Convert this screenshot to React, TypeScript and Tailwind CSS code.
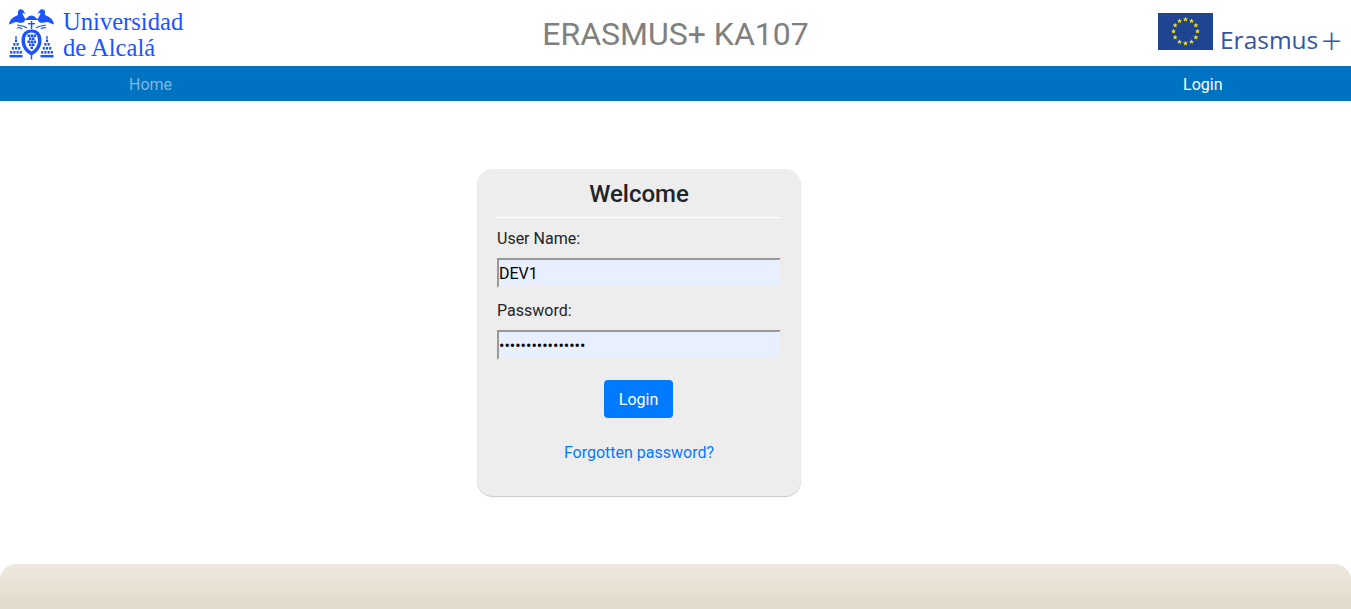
import React from 'react';

const roboto = 'font-[Roboto,sans-serif]';

// rows of dots in the towers on each side of the shield
const towerRows = [
  { y: 39.5, n: 1 },
  { y: 43, n: 2 },
  { y: 47, n: 3 },
  { y: 51, n: 4 },
];

function Tower({ cx }: { cx: number }) {
  return (
    <g>
      <rect x={cx - 0.7} y={36} width={1.4} height={3} />
      {towerRows.map((r) =>
        Array.from({ length: r.n }, (_, i) => (
          <rect key={`${r.y}-${i}`} x={cx + (i - (r.n - 1) / 2) * 3.2 - 1.1} y={r.y} width={2.2} height={2.6} />
        )),
      )}
      <rect x={cx - 6.5} y={55} width={13} height={2.4} />
    </g>
  );
}

function Crest() {
  const bird =
    'M18 12C18 9.500 21 8.500 23 10L25.500 14L23 12.700C22 13.500 23 15.500 24.500 17.500C25.500 19.500 25 21.500 23 22.500C20.500 23.500 18 22 16 22C13.500 22.500 11 24 9 24.500C9.500 20.500 12.500 17 17 15.500C18.500 15 18 13.500 18 12z';
  const squares = [
    [27.500, 34.500], [30.500, 34.500], [33.500, 34.500],
    [29, 37.500], [32, 37.500],
    [27.500, 40.500], [30.500, 40.500], [33.500, 40.500],
    [29, 43.500], [32, 43.500],
    [30.500, 46.500],
  ];
  return (
    <svg className="shrink-0" width="46" height="51" viewBox="9 9 46 51" fill="#1a53ff">
      <path d={bird} />
      <path d={bird} transform="translate(63 0) scale(-1 1)" />
      {/* cap and cross */}
      <path d="M27 18c1-1.500 2.500-2.500 4.500-2.500s3.500 1 4.500 2.500l2 1v1h-13v-1z" />
      <rect x="30.800" y="21" width="1.500" height="8" />
      <rect x="28" y="23" width="7" height="1.400" />
      <path d="M17 25c2 0 3 1 5 1s3 1 5 2M46 25c-2 0-3 1-5 1s-3 1-5 2M17 28c2-1 4 0 5 1M46 28c-2-1-4 0-5 1" fill="none" stroke="#1a53ff" strokeWidth="1.200" />
      {/* shield */}
      <path fillRule="evenodd" d="M31.500 29.500c6.500 0 10 4 10 11 0 7-4 12-10 15-6-3-10-8-10-15 0-7 3.500-11 10-11zm0 3c-4.500 0-6.500 3-6.500 8 0 5 2.500 8.500 6.500 11 4-2.500 6.500-6 6.500-11 0-5-2-8-6.500-8z" />
      <rect x="30.800" y="55" width="1.400" height="4.500" />
      {squares.map(([x, y]) => (
        <rect key={`${x}-${y}`} x={x} y={y} width={2.500} height={2.500} />
      ))}
      <Tower cx={16} />
      <Tower cx={47} />
    </svg>
  );
}

function EuFlag() {
  const stars = Array.from({ length: 12 }, (_, i) => {
    const a = (i * Math.PI) / 6;
    return { x: 27.500 + 12 * Math.sin(a), y: 18.300 - 12 * Math.cos(a) };
  });
  return (
    <svg className="shrink-0" width="55" height="37" viewBox="0 0 55 37">
      <rect x="0" y="0" width="55" height="37" fill="#1f4592" />
      {stars.map((s, i) => (
        <path
          key={i}
          transform={`translate(${s.x} ${s.y}) scale(1.250)`}
          d="M0-2 .6-.6 2-.6 .9.3 1.300 1.800 0 .9-1.300 1.800-.9.3-2-.6-.6-.6z"
          fill="#f7e017"
        />
      ))}
    </svg>
  );
}

export default function App() {
  return (
    <div className={`${roboto} flex h-[609px] flex-col overflow-hidden bg-white`}>
      <header className="flex h-[66px] items-start justify-between pl-[9px] pr-[11px]">
        <div className="flex w-[184px] items-start gap-[8px] pt-[9px]">
          <Crest />
          <div className="font-['Liberation_Serif',serif] text-[24.6px] leading-[26px] text-[#1a53ff]">
            <div>Universidad</div>
            <div>de Alcalá</div>
          </div>
        </div>
        <h1 className="pt-[15px] text-[32px] leading-[38px] text-[#808080]">ERASMUS+ KA107</h1>
        <div className="flex w-[182px] items-start gap-[7px] pt-[13px]">
          <EuFlag />
          <span className="whitespace-nowrap pt-[14px] font-['Open_Sans',sans-serif] text-[24.5px] font-normal leading-[25px] text-[#34559f]">
            Erasmus<span className="ml-[3px] align-[-5px] text-[36px] font-light leading-[25px]">+</span>
          </span>
        </div>
      </header>

      <nav className="flex h-[35px] items-center justify-between bg-[#0072c2] pl-[129px] pr-[128.5px] pt-[2px] text-[16px] leading-[24px]">
        <a className="text-[#7fb8e0]">Home</a>
        <a className="text-white">Login</a>
      </nav>

      <main className="flex flex-1 pl-[477px] pt-[68px]">
        <form className="h-[327px] w-[324px] rounded-[16px] bg-[#ededed] px-[20px] pt-[10px] text-[16px] leading-[24px] text-[#212529] shadow-[0_1px_1px_#c8c8c8]">
          <h2 className="border-b border-white pb-[7px] text-center text-[24px] font-medium leading-[31px]">Welcome</h2>
          <label className="mt-[9px] block">User Name:</label>
          <input
            readOnly
            value="DEV1"
            className="mt-[7px] block h-[30px] w-[284px] border-2 border-b-[#ededed] border-l-[#999] border-r-[#ededed] border-t-[#999] bg-[#e8f0fe] text-[16px] text-black"
          />
          <label className="mt-[11px] block">Password:</label>
          <input
            readOnly
            type="password"
            value="aaaaaaaaaaaaaaaa"
            className="mt-[7px] block h-[30px] w-[284px] border-2 border-b-[#ededed] border-l-[#999] border-r-[#ededed] border-t-[#999] bg-[#e8f0fe] text-[16px] text-black"
          />
          <div className="mt-[20px] flex justify-center pr-[1px]">
            <button type="button" className="h-[38px] w-[69px] rounded-[4px] bg-[#007bff] pt-[1px] text-white">Login</button>
          </div>
          <div className="mt-[23px] text-center">
            <a className="text-[#007bff]">Forgotten password?</a>
          </div>
        </form>
      </main>

      <footer className="h-[45px] rounded-t-[16px] bg-gradient-to-b from-[#eee9df] to-[#e2dacb]" />
    </div>
  );
}
